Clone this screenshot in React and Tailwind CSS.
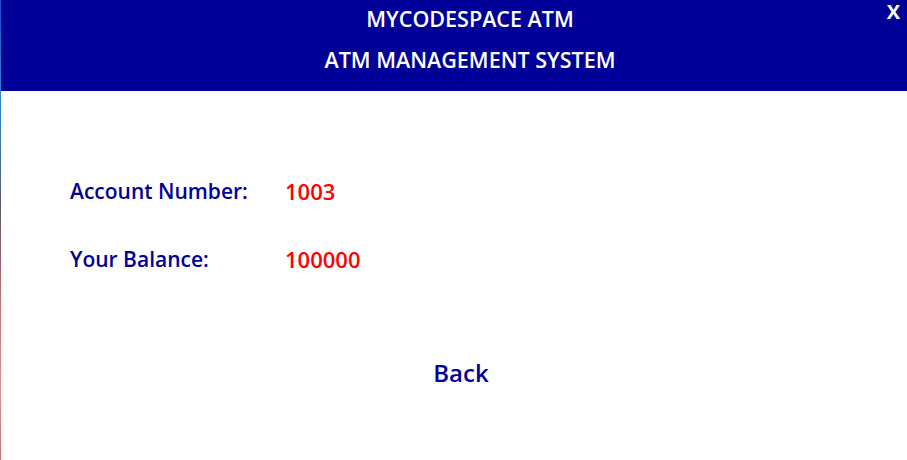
export default function App() {
    return (
        <div className="flex h-[460px] w-[907px] overflow-hidden bg-white font-['Open_Sans',sans-serif]">
            {/* desktop peeking through at the left edge */}
            <div className="w-px shrink-0 bg-[linear-gradient(to_bottom,#1a4bd0_0%,#2a8ad8_22%,#5a5a6a_45%,#c07070_65%,#e09090_85%,#c07070_100%)]" />

            <div className="flex flex-1 flex-col">
                {/* header */}
                <header className="relative flex h-[91px] flex-col items-center bg-[#000099] pl-[32px] pt-[4px] text-white">
                    <div className="text-[21.5px] font-semibold leading-[30px]">MYCODESPACE ATM</div>
                    <div className="mt-[11px] text-[21.5px] font-semibold leading-[30px]">ATM MANAGEMENT SYSTEM</div>
                    <button className="absolute right-[7px] top-[2px] text-[20px] font-bold leading-[20px]">X</button>
                </header>

                {/* details */}
                <div className="flex flex-col gap-[38px] pl-[69px] pt-[85px] text-[21px] font-semibold leading-[30px]">
                    <div className="flex">
                        <span className="w-[215px] text-[#000099]">Account Number:</span>
                        <span className="text-[22px] text-[#ff0000]">1003</span>
                    </div>
                    <div className="flex">
                        <span className="w-[215px] text-[#000099]">Your Balance:</span>
                        <span className="text-[22px] text-[#ff0000]">100000</span>
                    </div>
                </div>

                <div className="mt-[83px] flex justify-center pl-[14px]">
                    <button className="text-[24px] font-semibold leading-[32px] text-[#000099]">Back</button>
                </div>
            </div>
        </div>
    );
}
